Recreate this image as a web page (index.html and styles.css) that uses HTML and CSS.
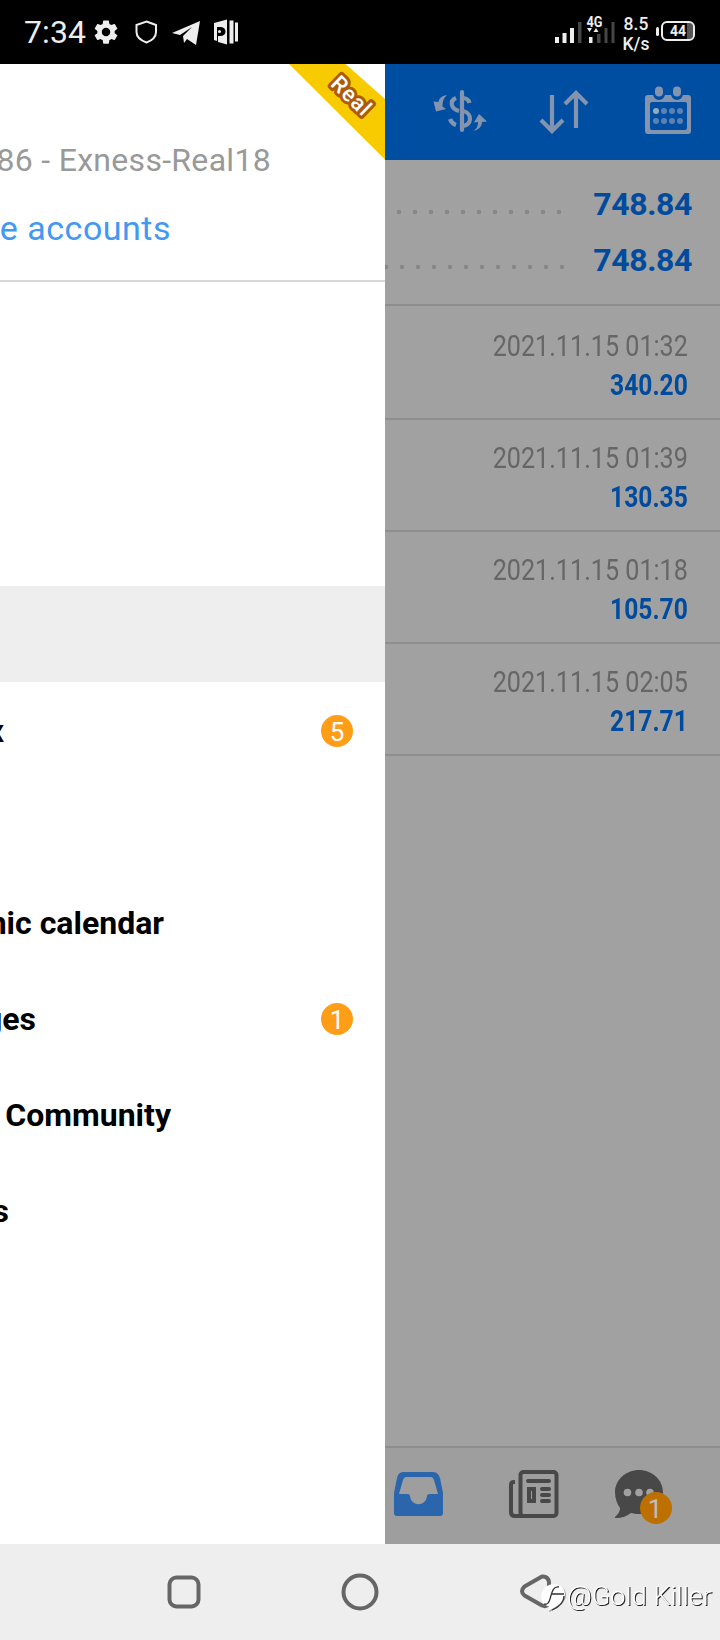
FILE: index.html
```html
<!DOCTYPE html>
<html lang="en">
<head>
<meta charset="utf-8">
<title>Trade history</title>
<link rel="stylesheet" href="styles.css">
</head>
<body>
<div class="phone">
  <header class="status">
    <span class="clock">7:34</span>
    <svg class="status-left" width="150" height="64" viewBox="90 0 150 64">
      <g fill="#eee">
        <g transform="translate(91.500 17.500) scale(1.210)"><path d="M19.140 12.940c.04-.3.06-.61.06-.94 0-.32-.02-.64-.07-.94l2.030-1.580c.18-.14.23-.41.12-.61l-1.920-3.320c-.12-.22-.37-.29-.59-.22l-2.390.96c-.5-.38-1.030-.7-1.620-.94L14.400 2.810c-.04-.24-.24-.41-.48-.41h-3.840c-.24 0-.43.17-.47.41L9.250 5.350c-.59.24-1.130.57-1.620.94l-2.390-.96c-.22-.08-.47 0-.59.22L2.740 8.870c-.12.21-.08.47.12.61l2.030 1.580c-.05.3-.09.63-.09.94s.02.64.07.94l-2.030 1.580c-.18.14-.23.41-.12.61l1.920 3.320c.12.22.37.29.59.22l2.390-.96c.5.38 1.030.7 1.620.94l.36 2.540c.05.24.24.41.48.41h3.840c.24 0 .44-.17.47-.41l.36-2.540c.59-.24 1.130-.56 1.620-.94l2.390.96c.22.08.47 0 .59-.22l1.920-3.320c.12-.22.07-.47-.12-.61l-2.010-1.580zM12 15.500a3.500 3.500 0 1 1 0-7 3.500 3.500 0 0 1 0 7z"/></g>
        <path d="M172 33 200 21l-4 24-9-6-3 4-1-7 9-9-12 8z"/>
        <path fill-rule="evenodd" d="M214 23l13-3.500v25L218 42v-6h3c6 0 6-9 0-9h-4v14l-3-1z"/>
        <circle cx="219.500" cy="31.500" r="1.500"/>
        <path d="M229.500 20.500h4v23h-4zM235 22.500h3v19h-3z"/>
      </g>
      <path d="M146.500 21.500 156 25v7c0 5-4 8.500-9.500 10.500C141 40.500 136.500 37 136.500 32v-7z" fill="none" stroke="#eee" stroke-width="2"/>
    </svg>
    <svg class="signals" width="64" height="64" viewBox="552 0 64 64">
      <g fill="#eee"><path d="M555 37h4v6h-4zM562.500 33h4v10h-4zM570 28h4v15h-4zM589 37h3.500v6H589zM587 28h5l-2.500 4zM593.500 32h5L596 28z"/></g>
      <path d="M578 22h3.500v21H578zM597 34h3.500v9H597zM604.500 28h3v15h-3zM611.500 22h3v21h-3z" fill="#464646"/>
      <text x="586.500" y="26.500" class="lte" textLength="16" lengthAdjust="spacingAndGlyphs">4G</text>
    </svg>
    <span class="speed">8.5<br>K/s</span>
    <span class="battery"><span class="tip"></span><span class="cell">44</span></span>
  </header>

  <main class="body">
    <aside class="drawer">
      <section class="account">
        <p class="server">86 - Exness-Real18</p>
        <p class="manage">e accounts</p>
        <svg class="ribbon" width="97" height="96" viewBox="0 0 97 96">
          <path d="M1 0h56.500L97 35v60.500z" fill="#f7cb00"/>
          <text transform="translate(62.500 33) rotate(44)" x="0" y="6" text-anchor="middle">Real</text>
        </svg>
      </section>
      <div class="blank"></div>
      <div class="band"></div>
      <nav class="menu">
        <div class="item"><span class="lab w4">x</span><b class="badge">5</b></div>
        <div class="item"></div>
        <div class="item"><span class="lab w164">nic calendar</span></div>
        <div class="item"><span class="lab w36">ges</span><b class="badge">1</b></div>
        <div class="item"><span class="lab w171">Community</span></div>
        <div class="item"><span class="lab w8">s</span></div>
      </nav>
    </aside>

    <section class="app">
      <div class="toolbar">
        <svg width="335" height="96" viewBox="385 64 335 96">
          <g fill="none" stroke="#8494ae" stroke-width="4.200">
            <path d="M462 92v38" stroke-linecap="round"/>
            <path d="M469.500 103c-1-4-4-5-7-5M463 111c10 2 9 15-1 15M456 98c-7 3-5 11 3 13M450 119c1 3 3 5 6 6"/>
            <path d="M552 95v34M541 120l11 11 11-11M576 128V94M565 104l11-11 11 11"/>
          </g>
          <g fill="#8494ae"><path d="M447 95c-6 1-8 4-8.500 7l-5-.5 2.500 10 10-2.500-3.500-2.500c0-5 1-8 4.500-11.500zM473 131c4-2 5-5 5-9l-4 .5 5-8.500 8 7.500-5 .5c0 5-4 8-9 9z"/></g>
          <path fill-rule="evenodd" fill="#8494ae" d="M648 95h40q3 0 3 3v33q0 3-3 3h-40q-3 0-3-3V98q0-3 3-3zm4 7q-2 0-2 2v24q0 2 2 2h33q2 0 2-2v-24q0-2-2-2z"/>
          <path d="M659 91v3M677 91v3" stroke="#004ea2" stroke-width="12" stroke-linecap="round"/>
          <path d="M659 90.500v2M677 90.500v2" stroke="#8494ae" stroke-width="8" stroke-linecap="round"/>
          <g fill="#5c81b3"><circle cx="656" cy="111" r="3" fill="#99a9bf"/><circle cx="664" cy="111" r="3"/><circle cx="672" cy="111" r="3"/><circle cx="680" cy="111" r="3"/><circle cx="656" cy="121" r="3"/><circle cx="664" cy="121" r="3"/><circle cx="672" cy="121" r="3"/><circle cx="680" cy="121" r="3"/></g>
        </svg>
      </div>
      <div class="summary">
        <div class="sum"><i class="dots"></i><strong>748.84</strong></div>
        <div class="sum"><i class="dots later"></i><strong>748.84</strong></div>
      </div>
      <div class="deal"><span class="date">2021.11.15 01:32</span><span class="amount">340.20</span></div>
      <div class="deal"><span class="date">2021.11.15 01:39</span><span class="amount">130.35</span></div>
      <div class="deal"><span class="date">2021.11.15 01:18</span><span class="amount">105.70</span></div>
      <div class="deal"><span class="date">2021.11.15 02:05</span><span class="amount">217.71</span></div>
      <div class="space"></div>
      <div class="tabs">
        <svg width="335" height="96" viewBox="385 1448 335 96">
          <path fill-rule="evenodd" fill="#2b65ac" d="M404 1472h29c4 0 6 3 7 6l3 15v20q0 3-3 3h-43q-3 0-3-3v-20l3-15c1-4 3-6 7-6zm2 5q-2 0-3 3l-4 14h8q3 0 3 2c1 11 16 11 17 0q0-2 3-2h8l-4-14q-1-3-3-3z"/>
          <g fill="none" stroke="#484848" stroke-width="4"><rect x="520.500" y="1472" width="36" height="44" rx="3"/><path d="M515 1482h-1q-3 0-3 3v27q0 4 4 4h8"/><path d="M528 1481h21M542 1489h7M542 1495h7M542 1501h7" stroke-linecap="round"/><rect x="529" y="1489" width="5" height="12"/></g>
          <path d="M639 1470c13 0 24 10 24 22s-10 22-24 22c-3 0-6-.5-8-1-4 3-9 5-15 5-2 0-1-1 0-2 3-3 4-5 4-8-3-4-5-10-5-16 0-12 11-22 24-22z" fill="#484848"/>
          <g fill="#a1a1a1"><circle cx="627.500" cy="1492.500" r="3.800"/><circle cx="639" cy="1492.500" r="3.800"/><circle cx="650" cy="1492.500" r="3.800"/></g>
          <circle cx="656" cy="1508" r="16" fill="#bd7000"/>
          <text x="655" y="1517.500" class="tabnum" text-anchor="middle">1</text>
        </svg>
      </div>
    </section>
  </main>

  <footer class="nav">
    <svg width="720" height="96" viewBox="0 0 720 96">
      <g fill="none" stroke="#666" stroke-width="4" stroke-linejoin="round">
        <rect x="169.500" y="33.500" width="29" height="29" rx="7"/><circle cx="360" cy="48" r="16.500"/>
        <path d="M542 32.500 524.500 42.500q-5 5 0 9L542 61.500q5 2 7-3V38q-1-6-7-5.500z"/>
      </g>
      <g class="mark-icon" fill="#fff"><path d="M549 41c9-3 16 2 16 9s-8 13-17 17l1-5c-10-1-11-16 0-21z"/></g>
      <path d="M559 43c-6-1-7 5-9 12-1 4-3 6-6 5M552 50h12M564 52c0 6-5 11-12 14" fill="none" stroke="#333" stroke-width="1.300"/>
      <text class="mark" x="567" y="60.500" textLength="145" lengthAdjust="spacingAndGlyphs">@Gold Killer</text>
    </svg>
  </footer>
</div>
</body>
</html>
```
FILE: styles.css
```css
* { box-sizing: border-box; }
body { margin: 0; font-family: Roboto, sans-serif; }
p { margin: 0; }
svg { display: block; flex: none; }
.phone { width: 720px; height: 1640px; display: flex; flex-direction: column; overflow: hidden; }
.status { height: 64px; background: #000; color: #eee; display: flex; flex: none; padding-left: 24px; }
.clock { width: 66px; font-size: 32px; line-height: 65px; letter-spacing: .1px; white-space: nowrap; }
.signals { margin-left: 312px; }
.lte { font: 700 14px Roboto, sans-serif; fill: #eee; }
.speed { width: 28px; margin-left: 6px; padding-top: 14px; font-size: 17.5px; line-height: 20px; font-weight: 500; text-align: center; }
.battery { display: flex; align-items: center; gap: 2px; margin-left: 6px; height: 62px; }
.tip { width: 3px; height: 9px; border-radius: 2px; background: #eee; }
.cell { width: 34px; height: 20px; border: 2px solid #eee; border-radius: 6px; font-size: 14px; font-weight: 700; line-height: 16px; text-align: center; background: linear-gradient(90deg, transparent 80%, #555 80%) content-box; }
.body { flex: 1; display: flex; min-height: 0; }
.drawer { width: 385px; background: #fff; overflow: hidden; }
.account { height: 218px; position: relative; border-bottom: 2px solid #d8d8d8; padding-top: 74px; }
.server, .manage { display: flex; justify-content: flex-end; white-space: nowrap; font-size: 32px; line-height: 44px; }
.server { width: 271px; color: #999; letter-spacing: .3px; }
.manage { width: 171px; margin-top: 24px; color: #4398f0; font-size: 34px; letter-spacing: .5px; }
.ribbon { position: absolute; right: 0; top: 0; }
.ribbon text { font: 500 22px Roboto, sans-serif; fill: #fff; stroke: #ad5b08; stroke-width: 6px; stroke-linejoin: round; paint-order: stroke; letter-spacing: 1px; }
.blank { height: 304px; }
.band { height: 96px; background: #eee; }
.item { height: 96px; display: flex; align-items: center; justify-content: space-between; padding: 2px 32px 0 0; }
.lab { display: flex; justify-content: flex-end; white-space: nowrap; font-size: 32px; font-weight: 700; line-height: 44px; color: #000; }
.w4 { width: 4px; } .w8 { width: 9px; } .w36 { width: 36px; } .w164 { width: 164px; } .w171 { width: 171px; }
.badge { width: 32px; height: 32px; border-radius: 50%; background: #ff9d17; color: #fff; font-size: 26px; font-weight: 400; line-height: 34px; text-align: center; }
.app { width: 335px; background: #a1a1a1; display: flex; flex-direction: column; overflow: hidden; }
.toolbar { height: 96px; flex: none; background: #004ea2; }
.summary { height: 146px; flex: none; border-bottom: 2px solid #8e8e8e; padding: 17px 28px 0 0; }
.sum { height: 55px; display: flex; align-items: center; justify-content: space-between; }
.sum strong { font-size: 32px; line-height: 55px; color: #004b9e; letter-spacing: -.4px; }
.dots { width: 181px; height: 6px; margin-top: 14px; background: radial-gradient(circle at 8px 3px, #868686 1.800px, transparent 2.600px) 6px 0 / 16px 6px; }
.later { background-position: 9px 0; }
.deal { height: 112px; flex: none; border-bottom: 2px solid #8e8e8e; padding: 18px 32px 0 0; display: flex; flex-direction: column; align-items: flex-end; }
.summary + .deal { height: 114px; padding-top: 20px; }
.date, .amount { font-size: 30px; line-height: 39px; white-space: nowrap; transform-origin: right; }
.date { color: #666; transform: scaleX(.838); }
.amount { color: #004b9e; font-weight: 700; transform: scaleX(.82); }
.space { flex: 1; }
.tabs { height: 98px; border-top: 2px solid #8e8e8e; background: #9e9e9e; flex: none; }
.tabnum { font: 26px Roboto, sans-serif; fill: #bdbdbd; }
.nav { height: 96px; background: #eee; flex: none; }
.mark { font: 300 26px Roboto, sans-serif; fill: #fff; filter: drop-shadow(1px 1px .3px #222); }
.mark-icon { filter: drop-shadow(1px 1px .5px #999); }
.sum + .sum { height: 56px; }
```
